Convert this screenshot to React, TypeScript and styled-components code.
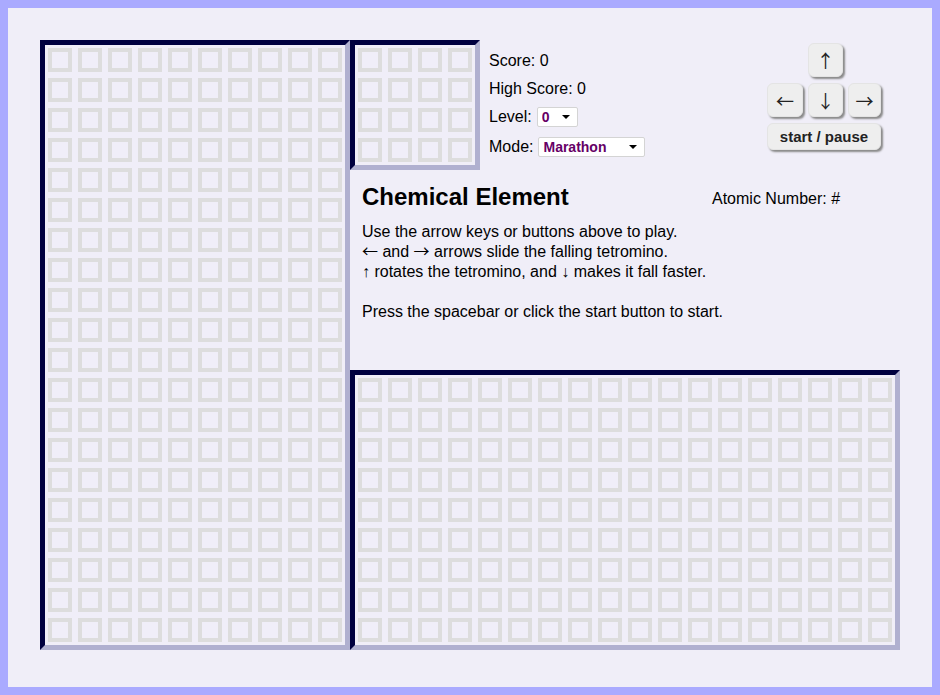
import React from "react";
import styled, { createGlobalStyle } from "styled-components";

const GlobalStyle = createGlobalStyle`
  html, body {
    margin: 0;
    padding: 0;
  }
  body {
    font-family: "Liberation Sans", Arial, sans-serif;
    font-size: 16px;
    color: #000;
  }
`;

const Frame = styled.div`
  box-sizing: border-box;
  width: 940px;
  height: 695px;
  border: 8px solid #aaaaff;
  background: #f0eef8;
  padding: 32px;
  display: flex;
  align-items: flex-start;
`;

const Board = styled.div<{ $cols: number }>`
  display: grid;
  grid-template-columns: repeat(${(p) => p.$cols}, 30px);
  grid-auto-rows: 30px;
  border: 5px solid;
  border-color: #000040 #b0b0d0 #b0b0d0 #000040;
  width: max-content;
`;

const Cell = styled.div`
  box-sizing: border-box;
  width: 24px;
  height: 24px;
  margin: 3px;
  border: 4px solid #dddddd;
`;

const Side = styled.div`
  width: 550px;
  height: 610px;
  display: flex;
  flex-direction: column;
  justify-content: space-between;
`;

const TopRow = styled.div`
  display: flex;
  align-items: flex-start;
  height: 130px;
`;

const Stats = styled.div`
  margin-left: 9px;
  padding-top: 7px;
  display: flex;
  flex-direction: column;
`;

const StatRow = styled.div<{ $gap?: number }>`
  height: 28px;
  margin-top: ${(p) => p.$gap ?? 0}px;
  display: flex;
  align-items: center;
  gap: 5px;
  white-space: nowrap;
`;

const SelectWrap = styled.span<{ $w: number }>`
  position: relative;
  display: inline-block;
  width: ${(p) => p.$w}px;
  height: 20px;

  &::after {
    content: "";
    position: absolute;
    right: 8px;
    top: 8px;
    border-left: 4px solid transparent;
    border-right: 4px solid transparent;
    border-top: 4px solid #000;
    pointer-events: none;
  }
`;

const Select = styled.select`
  appearance: none;
  box-sizing: border-box;
  width: 100%;
  height: 100%;
  border: 1px solid #d4d4d4;
  border-radius: 2px;
  background: #fff;
  color: #660066;
  font: bold 14px "Liberation Sans", Arial, sans-serif;
  padding: 0 0 0 4px;
  margin: 0;
  outline: none;
`;

const Controls = styled.div`
  margin-left: auto;
  margin-right: 19px;
  margin-top: 3px;
  display: grid;
  grid-template-columns: 36px 35px 33px;
  grid-auto-rows: 34px;
  column-gap: 5px;
  row-gap: 6px;
`;

const Key = styled.button<{ $col?: number; $wide?: boolean }>`
  grid-column: ${(p) => (p.$wide ? "1 / -1" : p.$col ? `${p.$col}` : "auto")};
  height: ${(p) => (p.$wide ? "27px" : "34px")};
  box-sizing: border-box;
  margin: 0;
  padding: 0;
  border: 1px solid #e4e4e4;
  border-radius: 6px;
  background: #eeeeee;
  box-shadow: 2px 2px 2px #8a8a8a;
  color: #222;
  font-family: ${(p) =>
    p.$wide
      ? `"Liberation Sans", Arial, sans-serif`
      : `"Noto Sans CJK SC", sans-serif`};
  font-size: ${(p) => (p.$wide ? "15px" : "18px")};
  font-weight: ${(p) => (p.$wide ? "bold" : "normal")};
  line-height: 1;
  cursor: pointer;
`;

const Info = styled.div`
  flex: 1;
  padding: 13px 0 0 12px;
`;

const TitleRow = styled.div`
  display: grid;
  grid-template-columns: 350px auto;
  align-items: center;
`;

const Title = styled.h1`
  margin: 0;
  font-size: 24px;
  line-height: 28px;
  font-weight: bold;
`;

const Atomic = styled.div`
  margin-top: 3px;
`;

const Text = styled.p`
  margin: 11px 0 20px;
  line-height: 20px;
`;

// side arrows: the CJK face gives the long thin shaft of the original
const Arrow = styled.span`
  font-family: "Noto Sans CJK SC", sans-serif;
  line-height: 0;
`;

const Preview = styled(Board)``;

function cells(n: number) {
  return Array.from({ length: n }, (_, i) => <Cell key={i} />);
}

export default function App() {
  return (
    <>
      <GlobalStyle />
      <Frame>
        <Board $cols={10}>{cells(200)}</Board>
        <Side>
          <div>
            <TopRow>
              <Preview $cols={4}>{cells(16)}</Preview>
              <Stats>
                <StatRow>Score: 0</StatRow>
                <StatRow>High Score: 0</StatRow>
                <StatRow>
                  Level:
                  <SelectWrap $w={41}>
                    <Select defaultValue="0">
                      <option value="0">0</option>
                      <option value="1">1</option>
                      <option value="2">2</option>
                    </Select>
                  </SelectWrap>
                </StatRow>
                <StatRow $gap={2}>
                  Mode:
                  <SelectWrap $w={107}>
                    <Select defaultValue="marathon">
                      <option value="marathon">Marathon</option>
                      <option value="sprint">Sprint</option>
                    </Select>
                  </SelectWrap>
                </StatRow>
              </Stats>
              <Controls>
                <Key $col={2}>↑</Key>
                <Key $col={1}>←</Key>
                <Key $col={2}>↓</Key>
                <Key $col={3}>→</Key>
                <Key $wide>start / pause</Key>
              </Controls>
            </TopRow>
            <Info>
              <TitleRow>
                <Title>Chemical Element</Title>
                <Atomic>Atomic Number: #</Atomic>
              </TitleRow>
              <Text>
                Use the arrow keys or buttons above to play.
                <br />
                <Arrow>←</Arrow> and <Arrow>→</Arrow> arrows slide the falling tetromino.
                <br />↑ rotates the tetromino, and ↓ makes it fall faster.
              </Text>
              <Text>Press the spacebar or click the start button to start.</Text>
            </Info>
          </div>
          <Board $cols={18}>{cells(162)}</Board>
        </Side>
      </Frame>
    </>
  );
}
